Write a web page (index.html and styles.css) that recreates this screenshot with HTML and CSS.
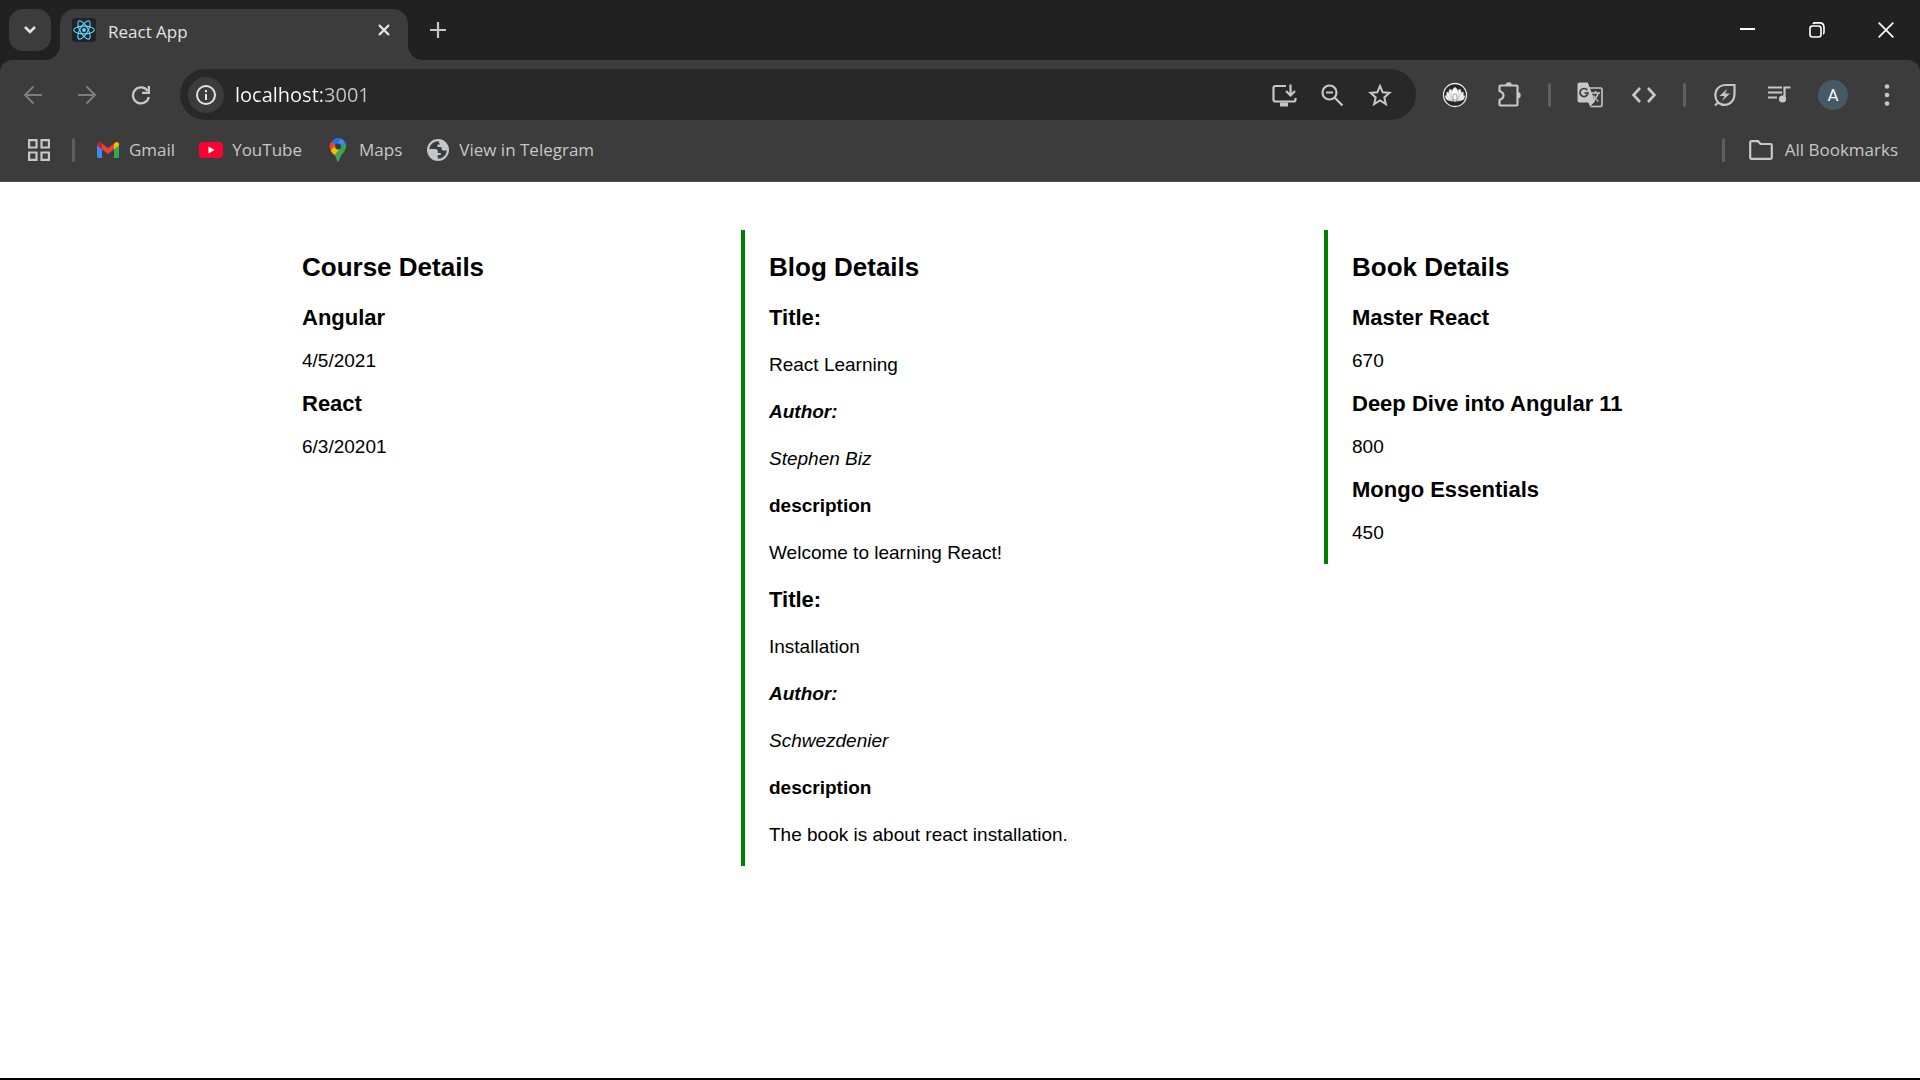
FILE: index.html
```html
<!DOCTYPE html>
<html lang="en">
<head>
<meta charset="utf-8">
<title>React App</title>
<link rel="stylesheet" href="styles.css">
</head>
<body>
<header class="browser">
  <div class="tabstrip">
    <button class="tab-search" aria-label="Search tabs"><svg width="14" height="10" viewBox="0 0 14 10"><path d="M2 2l5 5 5-5" fill="none" stroke="#e3e3e3" stroke-width="2.6"/></svg></button>
    <div class="tab">
      <svg class="favicon" width="24" height="24" viewBox="0 0 24 24"><rect width="24" height="24" rx="3" fill="#20232a"/><g fill="none" stroke="#61dafb" stroke-width="1.1"><ellipse cx="12" cy="12" rx="10.3" ry="3.9"/><ellipse cx="12" cy="12" rx="10.3" ry="3.9" transform="rotate(60 12 12)"/><ellipse cx="12" cy="12" rx="10.3" ry="3.9" transform="rotate(120 12 12)"/></g><circle cx="12" cy="12" r="1.9" fill="#61dafb"/></svg>
      <span class="tab-title">React App</span>
      <button class="tab-close" aria-label="Close tab"><svg width="14" height="14" viewBox="0 0 14 14"><path d="M2 2l10 10M12 2L2 12" stroke="#e3e3e3" stroke-width="2.4"/></svg></button>
    </div>
    <button class="new-tab" aria-label="New tab"><svg width="16" height="16" viewBox="0 0 16 16"><path d="M8 0v16M0 8h16" stroke="#c7c7c7" stroke-width="2.2"/></svg></button>
    <div class="window-controls">
      <button aria-label="Minimize"><svg width="16" height="16" viewBox="0 0 16 16"><path d="M0 7h15" stroke="#fff" stroke-width="2"/></svg></button>
      <button aria-label="Restore"><svg width="16" height="16" viewBox="0 0 16 16" fill="none" stroke="#fff" stroke-width="1.6"><rect x="1" y="4" width="11" height="11" rx="2.5"/><path d="M4 1.8Q4.500 .9 6 .9h4.500Q15 .9 15 5.500V10q0 1.500-1 2"/></svg></button>
      <button aria-label="Close"><svg width="16" height="16" viewBox="0 0 16 16"><path d="M.7.7l14.600 14.600M15.300.7L.7 15.300" stroke="#fff" stroke-width="1.700"/></svg></button>
    </div>
  </div>

  <div class="toolbar">
    <button class="tool" aria-label="Back"><svg width="20" height="20" viewBox="0 0 20 20" fill="none" stroke="#7d7d7d" stroke-width="2"><path d="M19 10H2.500M10.500 1.500L2 10l8.500 8.500"/></svg></button>
    <button class="tool" aria-label="Forward"><svg width="20" height="20" viewBox="0 0 20 20" fill="none" stroke="#7d7d7d" stroke-width="2"><path d="M1 10h16.500M9.500 1.500L18 10l-8.500 8.500"/></svg></button>
    <button class="tool" aria-label="Reload"><svg width="20" height="20" viewBox="0 0 20 20"><path d="M16.500 5.800A8 8 0 1 0 17.800 12" fill="none" stroke="#c7c7c7" stroke-width="2.300"/><path d="M19 1v8h-8V6.700h5.700V1z" fill="#c7c7c7"/></svg></button>
    <div class="omnibox">
      <button class="site-info" aria-label="View site information"><svg width="22" height="22" viewBox="0 0 22 22"><circle cx="11" cy="11" r="9" fill="none" stroke="#e3e3e3" stroke-width="2"/><path d="M11 10v6M11 6v2.200" stroke="#e3e3e3" stroke-width="2"/></svg></button>
      <input class="address" type="text" value="localhost:3001" aria-label="Address and search bar">
      <button class="in-bar" aria-label="Install app"><svg width="26" height="24" viewBox="0 0 26 24" fill="none" stroke="#c7c7c7" stroke-width="2.200"><path d="M15 3H4.500Q2.500 3 2.500 5v11.500q0 2 2 2h18q2 0 2-2V15M19.500 1.500v10M15 8l4.500 4.500L24 8"/><path d="M9 21.500h8" stroke-width="4"/></svg></button>
      <button class="in-bar" aria-label="Zoom"><svg width="24" height="24" viewBox="0 0 24 24" fill="none" stroke="#c7c7c7" stroke-width="2.200"><circle cx="9.500" cy="9.500" r="7"/><path d="M14.500 14.500l8 8M6 9.500h7"/></svg></button>
      <button class="in-bar" aria-label="Bookmark this tab"><svg width="24" height="24" viewBox="0 0 24 24" fill="none" stroke="#c7c7c7" stroke-width="2"><path d="M12 3l2.700 6.300 6.800.6-5.200 4.500 1.600 6.700L12 17.500l-5.900 3.600 1.600-6.700L2.500 9.900l6.800-.6z"/></svg></button>
    </div>
    <button class="tool" aria-label="Lotus extension"><svg width="26" height="26" viewBox="0 0 26 26"><circle cx="13" cy="13" r="11.500" fill="#262626" stroke="#e8e8e8" stroke-width="1.300"/><g fill="#f8f8f8" stroke="#888" stroke-width=".4"><path d="M13 19Q3 20 3 14q2-2 5-.5Q12 15 13 19zM13 19q10 1 10-5-2-2-5-.5Q14 15 13 19z"/><path d="M13 19Q3 17 4.500 10q2.500-.5 5 2.500Q12 15 13 19zM13 19q10-2 8.500-9-2.500-.5-5 2.500Q14 15 13 19z"/><path d="M13 19Q4.500 13 7.500 7q2.500 0 4 4 1 3 1.500 8zM13 19q8.500-6 5.500-12-2.500 0-4 4-1 3-1.500 8z"/><path d="M13 20q-4-2-4-7 .5-6 4-8 3.500 2 4 8 0 5-4 7z"/></g><path d="M11 14q0-2 2-2t2 2v4h-4z" fill="#fff" stroke="#777" stroke-width=".7"/></svg></button>
    <button class="tool" aria-label="Extensions"><svg width="26" height="26" viewBox="0 0 26 26"><path d="M3.500 4.500q0-1 1-1h16q1 0 1 1v18q0 1-1 1h-16q-1 0-1-1V18q4-1.500 4-4.500T3.500 9z" fill="none" stroke="#c7c7c7" stroke-width="2.200"/><path d="M9.500 3.500a3.200 3.200 0 0 1 6.400 0zM21.500 10a3.200 3.200 0 0 1 0 6.400z" fill="#c7c7c7"/></svg></button>
    <span class="divider"></span>
    <button class="tool" aria-label="Google Translate"><svg width="26" height="26" viewBox="0 0 26 26"><path d="M12 6h11.500q1.500 0 1.500 1.500V23q0 1.500-1.500 1.500H13.500" fill="none" stroke="#c7c7c7" stroke-width="1.600"/><path d="M2.500.5h8.300L18 19.500l-5 5-1.700-4H2.500q-2 0-2-2v-16q0-2 2-2z" fill="#c7c7c7"/><path d="M10.300 8.200A4 4 0 1 0 11 11H7.500" fill="none" stroke="#3c3c3c" stroke-width="1.700"/><path d="M13.500 11H23M18.500 9v2M21 11.500q-1.500 5-6 8M16.500 13.500q2 4 5 6" fill="none" stroke="#c7c7c7" stroke-width="1.500"/></svg></button>
    <button class="tool" aria-label="Code"><svg width="26" height="16" viewBox="0 0 26 16" fill="none" stroke="#c7c7c7" stroke-width="2.600"><path d="M9 1L2.500 8 9 15M17 1l6.500 7L17 15"/></svg></button>
    <span class="divider"></span>
    <button class="tool" aria-label="Energy Saver"><svg width="24" height="24" viewBox="0 0 24 24"><path d="M2 22.500l3-3M5 19.500C-.5 12 3 2 13 2h8.500v8.500c0 10-9 14.500-16.500 9z" fill="none" stroke="#c7c7c7" stroke-width="2.200"/><path d="M14.500 5.500l-8 7.500h5l-2.500 5 8-7.500h-5z" fill="#c7c7c7"/></svg></button>
    <button class="tool" aria-label="Media controls"><svg width="24" height="22" viewBox="0 0 24 22"><path d="M1 3.500h14M1 8.500h14M1 13.500h9M17.500 15V3.500H23.500" fill="none" stroke="#c7c7c7" stroke-width="2.200"/><circle cx="15.500" cy="15" r="3.600" fill="#c7c7c7"/></svg></button>
    <button class="tool" aria-label="Profile"><span class="avatar">A</span></button>
    <button class="tool" aria-label="Menu"><svg width="6" height="24" viewBox="0 0 6 24" fill="#c7c7c7"><circle cx="3" cy="3.500" r="2.300"/><circle cx="3" cy="12" r="2.300"/><circle cx="3" cy="20.500" r="2.300"/></svg></button>
  </div>

  <nav class="bookmarks" aria-label="Bookmarks">
    <button class="apps" aria-label="Apps"><svg width="22" height="22" viewBox="0 0 22 22" fill="none" stroke="#c7c7c7" stroke-width="2.200"><path d="M1.100 1.100h7.400v7.400H1.100zM13.500 1.100h7.400v7.400h-7.400zM1.100 13.500h7.400v7.400H1.100zM13.500 13.500h7.400v7.400h-7.400z"/></svg></button>
    <span class="divider"></span>
    <div class="links">
      <a class="bookmark" href="#"><svg width="24" height="24" viewBox="0 0 24 24"><path d="M1 7v11.500Q1 20 2.500 20H6V10z" fill="#4285f4"/><path d="M23 7v11.500q0 1.500-1.500 1.500H18V10z" fill="#34a853"/><path d="M6 5.500l6 4.500 6-4.500v5.700L12 16l-6-4.800z" fill="#ea4335"/><path d="M1 7.500V6.300C1 4 3.500 3.300 5 4.700l1 .8v5.700z" fill="#c5221f"/><path d="M23 7.500V6.300c0-2.300-2.500-3-4-1.600l-1 .8v5.700z" fill="#fbbc04"/></svg>Gmail</a>
      <a class="bookmark" href="#"><svg width="24" height="24" viewBox="0 0 24 24"><rect y="4" width="24" height="16" rx="4" fill="#f03"/><path d="M9.500 8.500v7l6-3.500z" fill="#fff"/></svg>YouTube</a>
      <a class="bookmark" href="#"><svg width="24" height="24" viewBox="0 0 24 24"><path d="M5.800 3.600A8 8 0 0 1 14.500.5l-5.600 6.800z" fill="#1a73e8"/><path d="M5.800 3.600l4 3.400-5 6A8 8 0 0 1 5.800 3.600z" fill="#ea4335"/><path d="M14.500.5a8 8 0 0 1 4.800 4L14.200 10.500 9.500 7z" fill="#4285f4"/><path d="M19.300 4.500c2 4 .2 7.500-2 10.200-2.300 2.700-3.500 5-4.300 8.300-.4 1-1.500 1-1.800 0-.8-2.500-1.500-4.200-2.700-6z" fill="#34a853"/><path d="M4.700 12.500l5-5.500 4.500 3.500-5.700 6.800c-1.500-1.800-2.900-2.800-3.800-4.800z" fill="#fbbc04"/><circle cx="12" cy="8.500" r="3" fill="#3c3c3c"/></svg>Maps</a>
      <a class="bookmark" href="#"><svg width="24" height="24" viewBox="0 0 24 24"><circle cx="12" cy="12" r="11" fill="#c3c6cb"/><path d="M12.500 3.200A8.800 8.800 0 0 0 3.300 11h6q2.500 0 2.500 2.500V15h3v2h-3v3.700a8.800 8.800 0 0 0 9-8.200h-3q-2.300 0-2.300-2.300V9h-4V6.500h2.300z" fill="#3c3c3c"/></svg>View in Telegram</a>
    </div>
    <span class="divider push"></span>
    <button class="bookmark all"><svg width="24" height="20" viewBox="0 0 24 20"><path d="M1.200 2.500q0-1.300 1.300-1.300H9L11.500 4h10q1.300 0 1.300 1.300v12.200q0 1.300-1.300 1.300h-19q-1.300 0-1.300-1.300z" fill="none" stroke="#c7c7c7" stroke-width="2.200"/></svg>All Bookmarks</button>
  </nav>
</header>

<main class="page">
  <section class="column courses">
    <h2>Course Details</h2>
    <h3>Angular</h3>
    <p>4/5/2021</p>
    <h3>React</h3>
    <p>6/3/20201</p>
  </section>
  <section class="column blogs">
    <h2>Blog Details</h2>
    <article>
      <h3>Title:</h3>
      <p>React Learning</p>
      <h4 class="author">Author:</h4>
      <p class="author">Stephen Biz</p>
      <h4>description</h4>
      <p>Welcome to learning React!</p>
    </article>
    <article>
      <h3>Title:</h3>
      <p>Installation</p>
      <h4 class="author">Author:</h4>
      <p class="author">Schwezdenier</p>
      <h4>description</h4>
      <p>The book is about react installation.</p>
    </article>
  </section>
  <section class="column books">
    <h2>Book Details</h2>
    <h3>Master React</h3>
    <p>670</p>
    <h3>Deep Dive into Angular 11</h3>
    <p>800</p>
    <h3>Mongo Essentials</h3>
    <p>450</p>
  </section>
</main>
</body>
</html>
```
FILE: styles.css
```css
* { box-sizing: border-box; }

body {
  margin: 0;
  min-height: 100vh;
  display: flex;
  flex-direction: column;
  background: #fff;
  color: #000;
  border-bottom: 2px solid #000;
  font-family: "Liberation Sans", Arial, sans-serif;
}

button {
  display: flex;
  align-items: center;
  justify-content: center;
  padding: 0;
  border: 0;
  background: none;
  color: inherit;
  font: inherit;
}

svg { display: block; flex: none; }

/* Browser frame */
.browser {
  background: #202120;
  color: #c7c7c7;
  font-family: "Open Sans", "Noto Sans", sans-serif;
  font-size: 17px;
}

.tabstrip {
  display: flex;
  align-items: flex-start;
  height: 60px;
}

.tab-search {
  width: 42px;
  height: 42px;
  margin: 9px 9px 0;
  border-radius: 14px;
  background: #3c3c3c;
}

.tab {
  position: relative;
  display: flex;
  align-items: center;
  width: 348px;
  height: 51px;
  margin-top: 9px;
  padding: 0 17px 0 12px;
  border-radius: 15px 15px 0 0;
  background: #3c3c3c;
  color: #e3e3e3;
}

.tab::before,
.tab::after {
  content: "";
  position: absolute;
  bottom: 0;
  width: 15px;
  height: 15px;
}

.tab::before {
  right: 100%;
  background: radial-gradient(circle at 0 0, transparent 15px, #3c3c3c 15px);
}

.tab::after {
  left: 100%;
  background: radial-gradient(circle at 100% 0, transparent 15px, #3c3c3c 15px);
}

.favicon { margin-bottom: 9px; }
.tab-title { margin-left: 12px; padding-bottom: 6px; }
.tab-close { margin: 0 0 9px auto; }

.new-tab {
  width: 36px;
  height: 60px;
  margin-left: 12px;
}

.window-controls {
  display: flex;
  margin-left: auto;
}

.window-controls button { width: 69px; height: 60px; }

.toolbar {
  display: flex;
  align-items: center;
  height: 69px;
  padding: 0 6px;
  border-radius: 12px 12px 0 0;
  background: #3c3c3c;
}

.tool { width: 54px; height: 51px; }

.omnibox {
  flex: 1;
  display: flex;
  align-items: center;
  height: 51px;
  margin: 0 12px;
  padding: 0 12px 0 8px;
  border-radius: 26px;
  background: #282828;
}

.site-info {
  width: 36px;
  height: 36px;
  border-radius: 50%;
  background: #3c3c3c;
}

/* The host is drawn brighter than the port */
.address {
  flex: 1;
  min-width: 0;
  height: 36px;
  margin-left: 11px;
  padding: 0;
  border: 0;
  outline: 0;
  background: linear-gradient(90deg, #fff 87px, #c7c7c7 87px) text;
  -webkit-text-fill-color: transparent;
  color: #fff;
  font: inherit;
  font-size: 20px;
}

.in-bar { width: 48px; height: 48px; }

.divider {
  flex: none;
  width: 3px;
  height: 24px;
  margin: 0 12px;
  border-radius: 2px;
  background: #5e5e5e;
}

.avatar {
  width: 30px;
  border-radius: 50%;
  background: #455a64;
  color: #fff;
  font-family: Roboto, sans-serif;
  font-size: 17px;
  line-height: 30px;
  text-align: center;
}

.bookmarks {
  display: flex;
  align-items: center;
  height: 53px;
  padding: 0 22px 11px 28px;
  background: #3c3c3c;
  border-bottom: 1px solid #4a4a4a;
}

.bookmarks .divider { margin: 0 21px 0 22px; }
.bookmarks .push { margin: 0 24px 0 auto; }

.links { display: flex; gap: 24px; }

.bookmark {
  display: flex;
  align-items: center;
  gap: 9px;
  color: inherit;
  line-height: 24px;
  text-decoration: none;
}

.all { gap: 12px; }

/* Page */
.page {
  flex: 1;
  display: grid;
  grid-template-columns: 463fr 583fr 318fr;
  align-items: start;
  padding: 48px 278px;
}

.column {
  padding: 22px 0 20px 24px;
  border-left: 4px solid #008000;
}

.courses { border-left: 0; }

h2 {
  margin: 0 0 24px;
  font-size: 26px;
  line-height: 30px;
}

h3 {
  margin: 20px 0;
  font-size: 22px;
  line-height: 24px;
}

p {
  margin: 0;
  font-size: 19px;
  line-height: 22px;
}

h4 {
  margin: 25px 0;
  font-size: 19px;
  line-height: 22px;
}

.author { font-style: italic; }

article + article { margin-top: 24px; }
article h3 { margin: 0 0 24px; }
```
